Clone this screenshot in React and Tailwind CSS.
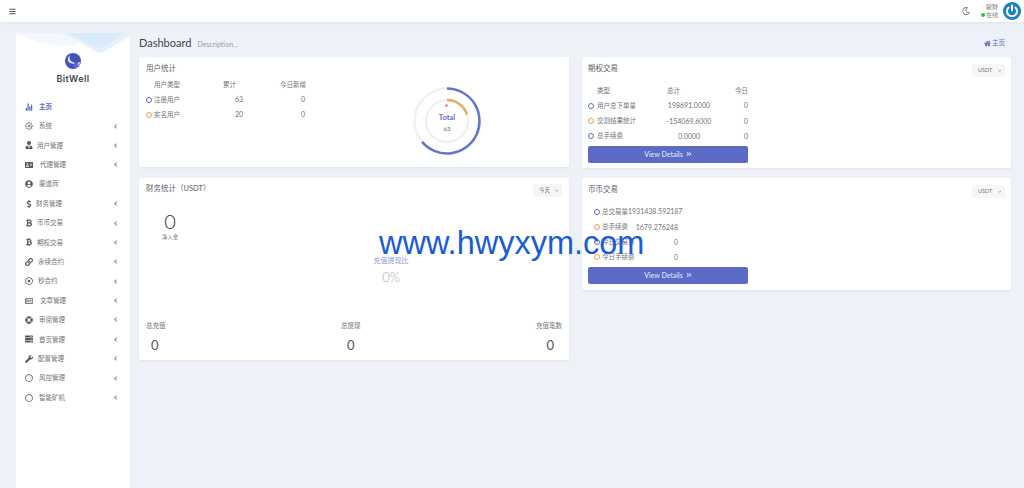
import React from "react";
import {
  FaAddressCard,
  FaBold,
  FaBtc,
  FaChevronDown,
  FaDollarSign,
  FaHome,
  FaLifeRing,
  FaLink,
  FaRegCircle,
  FaRegDotCircle,
  FaRegMoon,
  FaRegNewspaper,
  FaServer,
  FaUserCircle,
  FaUserTie,
  FaWrench,
  FaAngleDoubleRight,
  FaBars,
  FaAngleLeft,
} from "react-icons/fa";
import { FiSettings } from "react-icons/fi";
import { IoStatsChart } from "react-icons/io5";

const FONT = "font-['Lato','Noto_Sans_CJK_SC',sans-serif]";

const MENU = [
  { label: "主页", icon: IoStatsChart, gap: "w-[14px]", active: true, noArrow: true },
  { label: "系统", icon: FiSettings, gap: "w-[14px]" },
  { label: "用户管理", icon: FaUserTie, gap: "w-[12px]" },
  { label: "代理管理", icon: FaAddressCard, gap: "w-[15px]" },
  { label: "渠道商", icon: FaUserCircle, gap: "w-[14px]", noArrow: true },
  { label: "财务管理", icon: FaDollarSign, gap: "w-[11px]" },
  { label: "币币交易", icon: FaBold, gap: "w-[12px]" },
  { label: "期权交易", icon: FaBtc, gap: "w-[12px]" },
  { label: "永续合约", icon: FaLink, gap: "w-[13px]" },
  { label: "秒合约", icon: FaRegDotCircle, gap: "w-[13px]" },
  { label: "文章管理", icon: FaRegNewspaper, gap: "w-[15px]" },
  { label: "审阅管理", icon: FaLifeRing, gap: "w-[14px]" },
  { label: "首页管理", icon: FaServer, gap: "w-[14px]" },
  { label: "配置管理", icon: FaWrench, gap: "w-[13px]" },
  { label: "风控管理", icon: FaRegCircle, gap: "w-[14px]" },
  { label: "智能矿机", icon: FaRegCircle, gap: "w-[14px]" },
];

const MenuItem = ({ item }) => {
  const Icon = item.icon;
  return (
    <div
      className={`flex h-[19.4px] items-center pl-[9px] pr-[11px] text-[6.5px] ${
        item.active ? "text-[#5c6bc6] font-semibold" : "text-[#6f7278]"
      }`}
    >
      <span className={`${item.gap} shrink-0`}>
        <Icon className={`text-[8px] ${item.active ? "text-[#5c6bc6]" : "text-[#55585e]"}`} />
      </span>
      <span className="flex-1">{item.label}</span>
      {!item.noArrow && <FaAngleLeft className="text-[7px] text-[#8a8d93]" />}
    </div>
  );
};

const Sidebar = () => (
  <aside className="relative w-[114px] shrink-0 self-stretch bg-white">
    <svg viewBox="0 0 114 20" className="block h-[20px] w-[114px]">
      <path d="M0 0 C18 9 36 14 54 12 C66 10 74 6 84 0 Z" fill="#f3f8fe" />
      <path d="M45 0 C62 6 80 20 84 20 C92 18 104 8 114 3 L114 0 Z" fill="#e6f1fc" />
      <path d="M52 0 C66 8 78 14 86 15 C92 12 100 6 106 0 Z" fill="#d8eafb" />
    </svg>
    <div className="flex flex-col items-center">
      <svg viewBox="0 0 16 16" className="h-[16px] w-[16px]">
        <circle cx="8" cy="8" r="8" fill="#3f55b8" />
        <path d="M5 2 C1 6 3 10 7 10.5 C10 11 11 12.5 10.5 15 C14 13 15 11 15 9 C12 11 8 9.5 6.5 8.5 C4.5 7 4 5 5 2 Z" fill="#dfe6fb" />
        <circle cx="11" cy="12" r="2.4" fill="#6a5ee0" />
      </svg>
      <div className="mt-[3px] font-['Inter',sans-serif] text-[9px] font-semibold leading-[14px] tracking-[0.4px] text-[#3d4450]">
        BitWell
      </div>
    </div>
    <nav className="mt-[11px]">
      {MENU.map((item) => (
        <MenuItem key={item.label} item={item} />
      ))}
    </nav>
  </aside>
);

const Dot = ({ color }) => (
  <span className={`h-[6px] w-[6px] shrink-0 rounded-full border ${color}`} />
);

const Card = ({ title, className, children }) => (
  <section className={`relative rounded-[2px] bg-white shadow-[0_1px_2px_rgba(60,70,110,0.08)] ${className}`}>
    <h3 className="text-[7.5px] font-normal leading-[12px] text-[#5a5f66]">{title}</h3>
    {children}
  </section>
);

const Select = ({ label, className }) => (
  <div
    className={`absolute flex h-[13px] items-center justify-between rounded-[2px] bg-[#f6f6f6] pl-[6px] pr-[4px] text-[5.5px] text-[#777] ${className}`}
  >
    {label}
    <FaChevronDown className="text-[3.5px]" />
  </div>
);

const DetailsButton = () => (
  <button
    type="button"
    className="flex h-[17px] w-[160px] items-center justify-center gap-[3px] rounded-[2px] bg-[#5c6bc6] text-[7px] font-medium text-[#dfe3f6]"
  >
    View Details
    <FaAngleDoubleRight className="text-[6px]" />
  </button>
);

const UserStats = () => {
  const rows = [
    { dot: "border-[#5c6bc6]", name: "注册用户", total: "63", today: "0" },
    { dot: "border-[#e9a04a]", name: "实名用户", total: "20", today: "0" },
  ];
  return (
    <Card title="用户统计" className="h-[110px] px-[7px] pt-[6px]">
      <div className="mt-[2px] flex h-[15px] items-center whitespace-nowrap text-[6.5px] text-[#6f7278]">
        <span className="w-[77px] pl-[8px]">用户类型</span>
        <span className="w-[57px]">累计</span>
        <span>今日新增</span>
      </div>
      {rows.map((r) => (
        <div key={r.name} className="flex h-[15px] items-center text-[7px] text-[#6f7278]">
          <Dot color={r.dot} />
          <span className="w-[69px] pl-[2px] text-[6.5px]">{r.name}</span>
          <span className="w-[22px] text-right">{r.total}</span>
          <span className="w-[62px] text-right">{r.today}</span>
        </div>
      ))}
      <svg viewBox="0 0 70 70" className="absolute right-[87px] top-[29px] h-[70px] w-[70px]">
        <circle cx="35" cy="35" r="32.5" fill="none" stroke="#f1f1f1" strokeWidth="2.5" />
        <circle cx="35" cy="35" r="21" fill="none" stroke="#f1f1f1" strokeWidth="2.5" />
        <path d="M35 2.5 A32.5 32.5 0 1 1 10.1 55.9" fill="none" stroke="#6476cc" strokeWidth="2.5" />
        <path d="M35 14 A21 21 0 0 1 55 28.5" fill="none" stroke="#e3ad63" strokeWidth="2.5" />
        <circle cx="34.5" cy="19.5" r="1.2" fill="#e8707c" />
        <text x="35" y="34" textAnchor="middle" fontSize="7.5" fontWeight="700" fill="#5c6bc6">Total</text>
        <text x="35" y="45" textAnchor="middle" fontSize="6" fill="#666">63</text>
      </svg>
    </Card>
  );
};

const OptionTrade = () => {
  const rows = [
    { dot: "border-[#5c6bc6]", name: "用户总下单量", total: "198691.0000" },
    { dot: "border-[#e9a04a]", name: "交割结果统计", total: "-154069.6000" },
    { dot: "border-[#5c6bc6]", name: "总手续费", total: "0.0000" },
  ];
  return (
    <Card title="期权交易" className="h-[111px] px-[6px] pt-[6px]">
      <Select label="USDT" className="right-[6px] top-[7px] w-[33px]" />
      <div className="mt-[8px] flex h-[15px] w-[160px] items-center text-[6.5px] text-[#6f7278]">
        <span className="w-[79px] pl-[9px]">类型</span>
        <span className="flex-1">总计</span>
        <span>今日</span>
      </div>
      {rows.map((r) => (
        <div key={r.name} className="flex h-[15.3px] w-[160px] items-center text-[7px] text-[#6f7278]">
          <Dot color={r.dot} />
          <span className="w-[60px] shrink-0 pl-[3px] text-[6.5px]">{r.name}</span>
          <span className="w-[70px] shrink-0 text-center">{r.total}</span>
          <span className="flex-1 text-right">0</span>
        </div>
      ))}
      <div className="mt-[2px]">
        <DetailsButton />
      </div>
    </Card>
  );
};

const CoinTrade = () => {
  const rows = [
    { dot: "border-[#5c6bc6]", name: "总交易量", value: "1931438.592187" },
    { dot: "border-[#e9a04a]", name: "总手续费", value: "1679.276248" },
    { dot: "border-[#5c6bc6]", name: "今日交易量", value: "0" },
    { dot: "border-[#e9a04a]", name: "今日手续费", value: "0" },
  ];
  return (
    <Card title="币币交易" className="h-[112px] px-[6px] pt-[6px]">
      <Select label="USDT" className="right-[6px] top-[7px] w-[33px]" />
      <div className="mt-[8px]">
        {rows.map((r) => (
          <div key={r.name} className="flex h-[15.2px] w-[90px] items-center whitespace-nowrap pl-[6px] text-[7px] text-[#6f7278]">
            <Dot color={r.dot} />
            <span className="pl-[2px] text-[6.5px]">{r.name}</span>
            <span className="flex-1 text-right">{r.value}</span>
          </div>
        ))}
      </div>
      <div className="mt-[2px]">
        <DetailsButton />
      </div>
    </Card>
  );
};

const FinanceStats = () => {
  const totals = [
    { label: "总充值", align: "items-start", pad: "pl-[5px]" },
    { label: "总提现", align: "items-center", pad: "" },
    { label: "充值笔数", align: "items-end", pad: "pr-[8px]" },
  ];
  return (
    <Card title="财务统计（USDT）" className="flex h-[182px] flex-col px-[7px] pt-[5px]">
      <Select label="今天" className="right-[7px] top-[6px] w-[29px]" />
      <div className="mt-[14px] flex w-[48px] flex-col items-center">
        <span className="text-[20px] font-light leading-[24px] text-[#333]">0</span>
        <span className="text-[5.5px] leading-[8px] text-[#6f7278]">净入金</span>
      </div>
      <div className="mt-[14px] flex flex-col items-center pl-[74px]">
        <span className="text-[7px] leading-[10px] text-[#8f97d8]">充值提现比</span>
        <span className="mt-[3px] text-[13px] font-light leading-[18px] text-[#aaa]">0%</span>
      </div>
      <div className="mt-auto mb-[5px] flex justify-between">
        {totals.map((t) => (
          <div key={t.label} className={`flex flex-col ${t.align}`}>
            <span className="text-[6.5px] leading-[10px] text-[#6f7278]">{t.label}</span>
            <span className={`mt-[4px] text-[13px] leading-[20px] text-[#555] ${t.pad}`}>0</span>
          </div>
        ))}
      </div>
    </Card>
  );
};

const Header = () => (
  <header className="flex h-[22px] items-center bg-white pl-[9px] pr-[3px] shadow-[0_1px_3px_rgba(60,70,110,0.08)]">
    <FaBars className="text-[7px] text-[#555]" />
    <div className="ml-auto flex items-center">
      <FaRegMoon className="text-[8px] text-[#666]" />
      <div className="ml-[11px] flex flex-col items-end text-[6px] leading-[8px] text-[#777]">
        <span>骏财</span>
        <span className="flex items-center gap-[1px]">
          <span className="h-[4px] w-[4px] rounded-full bg-[#22c55e]" />
          在线
        </span>
      </div>
      <svg viewBox="0 0 18 18" className="ml-[5px] h-[18px] w-[18px]">
        <circle cx="9" cy="9" r="9" fill="#1a7fc4" />
        <path d="M9 3.5 V8.5" stroke="#fff" strokeWidth="2" strokeLinecap="round" />
        <path d="M5.6 5.6 A5 5 0 1 0 12.4 5.6" fill="none" stroke="#fff" strokeWidth="2" strokeLinecap="round" />
      </svg>
    </div>
  </header>
);

export default function App() {
  return (
    <div className={`relative h-[488px] w-[1024px] overflow-hidden bg-[#eef1f7] ${FONT}`}>
      <Header />
      <div className="flex h-[466px] pl-[16px] pt-[11px]">
        <Sidebar />
        <main className="ml-[9px] w-[872px]">
          <div className="flex h-[24px] items-center pb-[4px]">
            <span className="text-[11px] leading-[18px] text-[#444]">Dashboard</span>
            <span className="ml-[6px] mt-[2px] text-[7px] text-[#9a9ea6]">Description...</span>
            <span className="ml-auto mr-[6px] flex items-center gap-[1px] text-[6.5px] text-[#5c6bc6]">
              <FaHome className="text-[7px]" />
              主页
            </span>
          </div>
          <div className="grid grid-cols-[430px_429px] items-start gap-x-[13px] gap-y-[10px]">
            <UserStats />
            <OptionTrade />
            <FinanceStats />
            <CoinTrade />
          </div>
        </main>
      </div>
      {/* watermark over the page */}
      <div className="absolute left-[379px] top-[223px] font-['Liberation_Sans',sans-serif] text-[32.5px] leading-[40px] text-[#1a5cd6]">
        www.hwyxym.com
      </div>
    </div>
  );
}
